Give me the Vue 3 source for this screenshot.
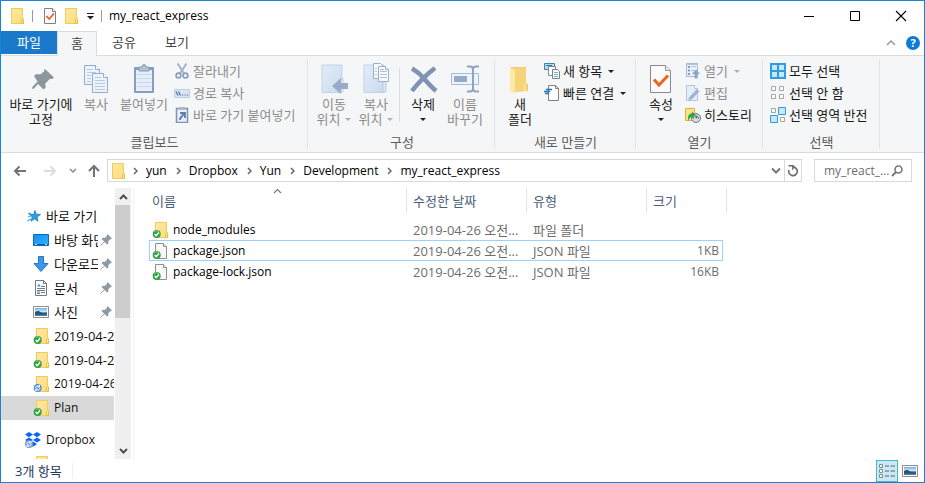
<script setup>
const tabs = ['홈', '공유', '보기']
const crumbs = ['yun', 'Dropbox', 'Yun', 'Development', 'my_react_express']

const quickAccess = [
  { name: '바탕 화면', icon: 'desktop', pinned: true },
  { name: '다운로드', icon: 'download', pinned: true },
  { name: '문서', icon: 'document', pinned: true },
  { name: '사진', icon: 'picture', pinned: true },
  { name: '2019-04-2', icon: 'folder-ok' },
  { name: '2019-04-2', icon: 'folder-ok' },
  { name: '2019-04-26', icon: 'folder-sync', latin: true },
  { name: 'Plan', icon: 'folder-ok', active: true, latin: true },
]

const files = [
  { name: 'node_modules', date: '2019-04-26 오전...', type: '파일 폴더', size: '', icon: 'folder-ok' },
  { name: 'package.json', date: '2019-04-26 오전...', type: 'JSON 파일', size: '1KB', icon: 'file-ok', focused: true },
  { name: 'package-lock.json', date: '2019-04-26 오전...', type: 'JSON 파일', size: '16KB', icon: 'file-ok' },
]

const groups = [
  {
    label: '클립보드',
    cls: 'g-clip',
    large: [
      { lines: ['바로 가기에', '고정'], icon: 'pin-lg', w: 'w72' },
      { lines: ['복사'], icon: 'copy-lg', w: 'w38', off: true },
      { lines: ['붙여넣기'], icon: 'paste-lg', w: 'w58', off: true },
    ],
    small: [
      { text: '잘라내기', icon: 'cut', off: true },
      { text: '경로 복사', icon: 'path', off: true },
      { text: '바로 가기 붙여넣기', icon: 'paste-link', off: true },
    ],
  },
  {
    label: '구성',
    cls: 'g-org',
    large: [
      { lines: ['이동', '위치'], icon: 'move-lg', w: 'w42', off: true, arrow: true },
      { lines: ['복사', '위치'], icon: 'copyto-lg', w: 'w42', off: true, arrow: true },
      { lines: ['삭제', ''], icon: 'delete-lg', w: 'w42', arrow: true, split: true },
      { lines: ['이름', '바꾸기'], icon: 'rename-lg', w: 'w42', off: true },
    ],
    small: [],
  },
  {
    label: '새로 만들기',
    cls: 'g-new',
    large: [{ lines: ['새', '폴더'], icon: 'newfolder-lg', w: 'w42' }],
    small: [
      { text: '새 항목', icon: 'newitem', arrow: true },
      { text: '빠른 연결', icon: 'easy', arrow: true },
    ],
  },
  {
    label: '열기',
    cls: 'g-open',
    large: [{ lines: ['속성', ''], icon: 'props-lg', w: 'w42', arrow: true }],
    small: [
      { text: '열기', icon: 'open', off: true, arrow: true },
      { text: '편집', icon: 'edit', off: true },
      { text: '히스토리', icon: 'history' },
    ],
  },
  {
    label: '선택',
    cls: 'g-sel',
    large: [],
    small: [
      { text: '모두 선택', icon: 'sel-all' },
      { text: '선택 안 함', icon: 'sel-none' },
      { text: '선택 영역 반전', icon: 'sel-inv' },
    ],
  },
]
</script>

<template>
  <div class="window">
    <svg class="defs" width="0" height="0" aria-hidden="true">
      <defs>
        <linearGradient id="gFolder" x1="0" y1="0" x2="1" y2="1"><stop offset="0" stop-color="#ffe9a2" /><stop offset="1" stop-color="#fbdb7c" /></linearGradient>
        <linearGradient id="gBlue" x1="0" y1="0" x2="1" y2="1"><stop offset="0" stop-color="#1490f0" /><stop offset="1" stop-color="#35b0ff" /></linearGradient>
        <linearGradient id="gPale" x1="0" y1="0" x2="1" y2="1"><stop offset="0" stop-color="#e3edf8" /><stop offset="1" stop-color="#c9daee" /></linearGradient>
        <linearGradient id="gSky" x1="0" y1="0" x2="0" y2="1"><stop offset="0" stop-color="#6eaee8" /><stop offset=".5" stop-color="#d9effa" /><stop offset=".6" stop-color="#31547a" /><stop offset="1" stop-color="#4e86ae" /></linearGradient>
      </defs>
      <symbol id="folder" viewBox="0 0 16 16">
        <path d="M1.500.5h11v9l1 1v5h-12z" fill="url(#gFolder)" stroke="#efcb5d" />
        <path d="M11.500 15.500v-4l1-1 1 1v4z" fill="#ffe69a" stroke="#e8bd43" />
      </symbol>
      <symbol id="badge-ok" viewBox="0 0 16 16">
        <circle cx="4.700" cy="12" r="4" fill="#2fa043" /><path d="M2.300 10a3 3 0 0 1 4.700 0" fill="none" stroke="#86cf8d" />
        <path d="M2.700 12l1.500 1.700 2.800-3.200" fill="none" stroke="#fff" stroke-width="1.400" />
      </symbol>
      <symbol id="badge-sync" viewBox="0 0 16 16">
        <circle cx="4.700" cy="12" r="4" fill="#5b8fd0" />
        <path d="M2.300 12a2.500 2.500 0 0 1 4-1.500M7.100 12a2.500 2.500 0 0 1-4 1.700M6.500 9v2h-2M2.800 15v-2h2" fill="none" stroke="#fff" />
      </symbol>
      <symbol id="folder-ok" viewBox="0 0 16 16">
        <path d="M3.500.5h11v9l1 1v5h-12z" fill="url(#gFolder)" stroke="#efcb5d" /><path d="M13.500 15.500v-4l1-1 1 1v4z" fill="#ffe69a" stroke="#e8bd43" />
        <use href="#badge-ok" />
      </symbol>
      <symbol id="folder-sync" viewBox="0 0 16 16">
        <path d="M3.500.5h11v9l1 1v5h-12z" fill="url(#gFolder)" stroke="#efcb5d" /><path d="M13.500 15.500v-4l1-1 1 1v4z" fill="#ffe69a" stroke="#e8bd43" />
        <use href="#badge-sync" />
      </symbol>
      <symbol id="file-ok" viewBox="0 0 16 16">
        <path d="M3.500.5h8l3 3v12h-11z" fill="#f8f8f8" stroke="#8f8f8f" /><path d="M11.500.5v3h3" fill="#fff" stroke="#8f8f8f" />
        <use href="#badge-ok" />
      </symbol>
      <symbol id="props" viewBox="0 0 16 16">
        <path d="M2.500.5h8l3 3v12h-11z" fill="#fafafa" stroke="#808080" /><path d="M10.500.5v3h3" fill="#fff" stroke="#808080" />
        <path d="M4.500 8l2.700 3 4.800-5.500" fill="none" stroke="#e8602c" stroke-width="1.800" />
      </symbol>
      <symbol id="pin" viewBox="0 0 12 12">
        <path d="M7.500 0L12 4.500l-1 .8-.8-.1-2 2.200.2 2-1.200 1.200-2.700-2.700L1 11.500l-1 .5.500-1 3.600-3.500L1.500 5l1.200-1.200 2 .2 2.200-2-.1-1z" fill="#8d9aa3" />
      </symbol>
      <symbol id="desktop" viewBox="0 0 16 16"><path d="M.5 2.500h15v11H.5z" fill="url(#gBlue)" stroke="#0a6cc0" /><path d="M1 12.500h14" stroke="#075ba6" /><path d="M2 12.500h2M12 12.500h2" stroke="#bfe4ff" /></symbol>
      <symbol id="download" viewBox="0 0 16 16"><path d="M5.500.5h5v7h4.500L8 15.500 1 7.500h4.500z" fill="#3b97e8" stroke="#2277c8" /></symbol>
      <symbol id="document" viewBox="0 0 16 16"><path d="M2.500.5h8l3 3v12h-11z" fill="#fff" stroke="#777" /><path d="M10.500.5v3h3" fill="none" stroke="#777" /><path d="M4 8.500h8M4 10.500h8M8 12.500h4M8 6.500h4M4 13.500h3M4 12h3" stroke="#657f99" /><path d="M4 6.500l2-3 1.500 3z" fill="#3c95dc" /></symbol>
      <symbol id="picture" viewBox="0 0 16 16"><path d="M.5 2.500h15v11H.5z" fill="#fff" stroke="#8d8d8d" /><path d="M2 4h12v8H2z" fill="url(#gSky)" /><path d="M2 8q3-2 6 .5t6 .5v1.500H2z" fill="#2d506c" /></symbol>
      <symbol id="star" viewBox="0 0 16 16"><path d="M9 2.500l1.200 3.700 4.300.3L11 9l1 4.200-3.500-2.400L5 13.200l1.400-4.200L3.500 6.500l4.200.1z" fill="#2f9fe8" stroke="#1578c2" stroke-width=".8" /><path d="M2 5.500h3M2 9l3-1M1.500 13l4-2.500" stroke="#4badea" stroke-width="1.300" /></symbol>
      <symbol id="dropbox" viewBox="0 0 18 18"><path d="M5 1l4 2.600L5 6.200 1 3.600zM13 1l4 2.600-4 2.600-4-2.600zM5 6.400L9 9l-4 2.600L1 9zM13 6.400L17 9l-4 2.600L9 9zM9 10.500l4 2.600-4 2.600-4-2.600z" fill="#0a64f5" /><circle cx="5" cy="13" r="4" fill="#6d9cd8" /><path d="M2.700 13a2.500 2.500 0 0 1 4-1.500M7.300 13a2.500 2.500 0 0 1-4 1.700M7 10v2H5M3 16v-2h2" fill="none" stroke="#fff" /></symbol>

      <symbol id="pin-lg" viewBox="0 0 32 32"><path d="M20 6l9 8.500-2 1.500-2-.3-4.800 5 .5 3.800-2.200 2-5.500-5.500L9 25.500 7 26l.5-2.300 5-5.200L9 13l2.200-2 4 .5L19.500 8 19 6.500z" fill="#8b979d" /></symbol>
      <symbol id="copy-lg" viewBox="0 0 32 32"><g fill="#edf3fb" stroke="#96abce"><path d="M4.500 2.500h11l4 4v15h-15z" /><path d="M15.500 2.500v4h4" fill="#fff" /><path d="M12.500 10.500h11l4 4v15h-15z" /><path d="M23.500 10.500v4h4" fill="#fff" /></g><path d="M7 6.500h6M7 9.500h9M7 12.500h4M7 15.500h4M7 18.500h4M15 14.500h6M15 17.500h10M15 20.500h10M15 23.500h10M15 26.500h10" stroke="#b6c9e3" /></symbol>
      <symbol id="paste-lg" viewBox="0 0 32 32"><rect x="6" y="4" width="20" height="26" rx="1" fill="#899dc2" /><path d="M8 7h16v21H8z" fill="#e6eff9" /><path d="M9 11.500h14M9 15.500h14M9 19.500h14M9 23.500h14" stroke="#c7d8eb" /><path d="M11 4h3q0-2.500 2-2.500T18 4h3v4H11z" fill="#b5c1d5" stroke="#8998b3" /></symbol>
      <symbol id="cut" viewBox="0 0 16 16"><path d="M3.500.5l6.500 10M12.500.5L6 10.500" stroke="#a3b3cc" stroke-width="2" /><g fill="none" stroke="#889dbd" stroke-width="1.600"><circle cx="4.500" cy="12.500" r="2.400" /><circle cx="11.500" cy="12.500" r="2.400" /></g></symbol>
      <symbol id="path" viewBox="0 0 16 16"><path d="M.5 4.500h15v8H.5z" fill="#d7e5f5" stroke="#bdcfe5" /><path d="M2 6.500l2 4M4.500 6.500l2 4M8 10h1.200M10.500 10h1.200M13 10h1.200" stroke="#526f9b" stroke-width="1.200" /></symbol>
      <symbol id="paste-link" viewBox="0 0 16 16"><path d="M2.500 1.500h11v14h-11z" fill="#e8f0fa" stroke="#7e95bb" stroke-width="1.500" /><path d="M5 0h6v3H5z" fill="#aab9d1" /><path d="M6 6h5v5M10.500 6.500L8 9q-2 2-2 4" fill="none" stroke="#617da9" stroke-width="1.800" /></symbol>
      <symbol id="move-lg" viewBox="0 0 32 32"><path d="M4 2h20v27.500H4z" fill="url(#gPale)" stroke="#c1d2e7" /><path d="M22.500 29V17.500l2.500-2.500v14" fill="#dae6f4" stroke="#c1d2e7" /><path d="M14 23l9-8v5h7v6h-7v5z" fill="#98abc9" /></symbol>
      <symbol id="copyto-lg" viewBox="0 0 32 32"><path d="M4 2h20v27.500H4z" fill="url(#gPale)" stroke="#c1d2e7" /><path d="M23 29V18l3-2v13z" fill="#dae6f4" stroke="#b9cde4" /><g fill="#f7faff" stroke="#9aafcf"><path d="M13.500.5h7l3 3v12h-10z" /><path d="M18.500 3.500h7l3 3v12h-10z" /><path d="M25.500 3.500v3h3" /></g><path d="M15 5.500h2M15 8.500h2M15 11.500h2M20 8.500h7M20 11.500h7M20 14.500h7M20 6.500h4" stroke="#adc1dd" /></symbol>
      <symbol id="delete-lg" viewBox="0 0 32 32"><path d="M5 5.500q7 4 11.500 9.500T29 28M28 5Q14 16 5 28" fill="none" stroke="#8193b3" stroke-width="4.500" /></symbol>
      <symbol id="rename-lg" viewBox="0 0 32 32"><path d="M2.500 10.500h27v11h-27z" fill="#edf4fc" stroke="#a6bbd7" /><path d="M5 13h13v6H5z" fill="#98aac8" /><path d="M18 3.500h3q3 0 3 3v19q0 3-3 3h-3M30 3.500h-3q-3 0-3 3v19q0 3 3 3h3" fill="none" stroke="#8fa3c2" stroke-width="2" /></symbol>
      <symbol id="newfolder-lg" viewBox="0 0 32 32"><path d="M6 4h16v16l2 1v7l-13 1z" fill="#f5cd68" /><path d="M6 4l5 3v24l-5-3z" fill="#ffe8a8" /><path d="M11 5h11v14l-2 3v6h-9z" fill="#f7d477" /><path d="M20 22l2-3v9h-2z" fill="#fae198" /></symbol>
      <symbol id="newitem" viewBox="0 0 16 16"><path d="M.5.5h10v6H.5z" fill="#b6dcf4" stroke="#3f82b2" /><path d="M4.500 3.500h7v9h-7z" fill="#fff" stroke="#7f8991" /><path d="M8.500 6.500h5l2 2v7h-7z" fill="#fff" stroke="#78818a" /><path d="M10 9.500h4M10 11.500h4M10 13.500h4" stroke="#73a6ca" /><path d="M2 2.500h6" stroke="#2d74a8" /></symbol>
      <symbol id="easy" viewBox="0 0 16 16"><path d="M4.500.5h7l3 3v12h-10z" fill="#fff" stroke="#818181" /><path d="M11.500.5v3h3" fill="none" stroke="#818181" /><path d="M2 4.500h6M0 6.500h6M1 8.500h4" stroke="#2572b8" stroke-width="1.300" /></symbol>
      <symbol id="props-lg" viewBox="0 0 32 32"><path d="M5.500 2.500h15l5 5v22h-20z" fill="#fbfbfb" stroke="#888" /><path d="M20.500 2.500v5h5" fill="#ececec" stroke="#999" /><path d="M9 16.500l5 5.500 9-9.500" fill="none" stroke="#ec6420" stroke-width="3" /></symbol>
      <symbol id="open" viewBox="0 0 16 16"><path d="M1.500.5h11v13h-11z" fill="#e9f1fb" stroke="#a7b9d5" /><path d="M3 3h2v2H3zM3 6.500h2v2H3zM3 10h2v2H3z" fill="#879dbf" /><path d="M6 3.500h5M6 7.500h4M1 1.500h12" stroke="#b2c3db" /><path d="M11 6.500l4 4.500h-2.500v4.500h-3V11H7z" fill="#8fa3c5" /></symbol>
      <symbol id="edit" viewBox="0 0 16 16"><path d="M1.500.5h8l3 3v12h-11z" fill="#e4eefa" stroke="#b4c5df" /><path d="M9.500.5v3h3" fill="#fff" stroke="#b4c5df" /><path d="M12 4L14.500 6.500 7 14l-4 1.500L4.500 12z" fill="#a0b2cd" /></symbol>
      <symbol id="history" viewBox="0 0 16 16"><path d="M.5 1.500h9v12h-9z" fill="#fde286" stroke="#dfb43b" /><circle cx="11" cy="11" r="4.500" fill="#d6dade" stroke="#737980" /><path d="M11 8v3l2-1.500M8 11h1M13 11h1" stroke="#41464d" fill="none" /><path d="M3.500 14.500Q1.500 7 7 6V4.500L10.500 8 7 11.500V9.500q-3 1-3.500 5z" fill="#27a64a" /></symbol>
      <symbol id="sel-all" viewBox="0 0 16 16"><path d="M1 1h7v7H1zM8 1h7v7H8zM1 8h7v7H1zM8 8h7v7H8z" fill="#c5e8fc" stroke="#319be0" stroke-width="2" /></symbol>
      <symbol id="sel-none" viewBox="0 0 16 16"><path d="M1.500 1.500h4v4h-4zM9.500 1.500h4v4h-4zM1.500 9.500h4v4h-4zM9.500 9.500h4v4h-4z" fill="#fff" stroke="#a3a3a3" /></symbol>
      <symbol id="sel-inv" viewBox="0 0 16 16"><path d="M1.500 1.500h4v4h-4zM10.500 10.500h4v4h-4z" fill="#fff" stroke="#a3a3a3" /><path d="M8.500.5h7v7h-7zM.5 8.500h7v7h-7z" fill="#c5e8fc" stroke="#319be0" /></symbol>
    </svg>

    <header class="titlebar">
      <svg class="i16" aria-hidden="true"><use href="#folder" /></svg>
      <span class="tick"></span>
      <button class="plain" aria-label="속성"><svg class="i16"><use href="#props" /></svg></button>
      <button class="plain" aria-label="새 폴더"><svg class="i16"><use href="#folder" /></svg></button>
      <button class="plain qat" aria-label="빠른 실행 도구 모음 사용자 지정"><svg width="7" height="7" viewBox="0 0 7 7"><path d="M0 .5h7" stroke="#222" /><path d="M0 3h7L3.500 6.500z" fill="#222" /></svg></button>
      <span class="tick"></span>
      <h1 class="title">my_react_express</h1>
      <div class="caption">
        <button class="plain" aria-label="최소화"><svg width="12" height="12" viewBox="0 0 12 12"><path d="M1 6.500h10" stroke="#000" /></svg></button>
        <button class="plain" aria-label="최대화"><svg width="12" height="12" viewBox="0 0 12 12"><path d="M1.500 1.500h9v9h-9z" fill="none" stroke="#000" /></svg></button>
        <button class="plain" aria-label="닫기"><svg width="12" height="12" viewBox="0 0 12 12"><path d="M1 1l10 10M11 1L1 11" stroke="#000" stroke-width="1.100" /></svg></button>
      </div>
    </header>

    <nav class="tabs">
      <button class="tab file">파일</button>
      <button v-for="(t, i) in tabs" :key="t" class="tab" :class="{ current: i === 0 }">{{ t }}</button>
      <div class="tab-tools">
        <button class="plain" aria-label="리본 최소화"><svg width="10" height="6" viewBox="0 0 10 6"><path d="M1 5l4-4 4 4" fill="none" stroke="#999" stroke-width="1.500" /></svg></button>
        <button class="plain help" aria-label="도움말">?</button>
      </div>
    </nav>

    <section class="ribbon">
      <div v-for="g in groups" :key="g.label" class="group" :class="g.cls">
        <div class="group-body">
          <template v-for="b in g.large" :key="b.icon">
            <span v-if="b.split" class="divider"></span>
            <button class="large" :class="[b.w, { off: b.off }]">
              <svg class="i32" aria-hidden="true"><use :href="'#' + b.icon" /></svg>
              <span v-for="(l, i) in b.lines" :key="i" class="line">
                <span v-if="l">{{ l }}</span>
                <i v-if="b.arrow && i === 1" class="arrow"></i>
              </span>
            </button>
          </template>
          <div v-if="g.small.length" class="smalls">
            <button v-for="s in g.small" :key="s.text" class="small" :class="{ off: s.off }">
              <svg class="i16" aria-hidden="true"><use :href="'#' + s.icon" /></svg>
              <span>{{ s.text }}</span>
              <i v-if="s.arrow" class="arrow"></i>
            </button>
          </div>
        </div>
        <div class="group-label">{{ g.label }}</div>
      </div>
    </section>

    <div class="navbar">
      <button class="plain nb" aria-label="뒤로"><svg width="14" height="12" viewBox="0 0 14 12"><path d="M13 6H2M6.500 1.500L2 6l4.500 4.500" fill="none" stroke="#737373" stroke-width="2" /></svg></button>
      <button class="plain nb" aria-label="앞으로"><svg width="14" height="12" viewBox="0 0 14 12"><path d="M1 6h11M7.500 1.500L12 6l-4.500 4.500" fill="none" stroke="#dcdcdc" stroke-width="2" /></svg></button>
      <button class="plain nb recent" aria-label="최근 위치"><svg width="8" height="6" viewBox="0 0 8 6"><path d="M1 1l3 3 3-3" fill="none" stroke="#8a8a8a" stroke-width="1.500" /></svg></button>
      <button class="plain nb up" aria-label="위로"><svg width="12" height="14" viewBox="0 0 12 14"><path d="M6 13V2M1 7l5-5 5 5" fill="none" stroke="#737373" stroke-width="2" /></svg></button>
      <div class="address">
        <svg class="i16 place" aria-hidden="true"><use href="#folder" /></svg>
        <template v-for="c in crumbs" :key="c">
          <svg class="chev" width="5" height="8" viewBox="0 0 5 8" aria-hidden="true"><path d="M1 1l3 3-3 3" fill="none" stroke="#666" stroke-width="1.500" /></svg>
          <a class="crumb" href="#">{{ c }}</a>
        </template>
        <button class="plain drop" aria-label="이전 위치"><svg width="10" height="8" viewBox="0 0 10 8"><path d="M1 1.500l4 4 4-4" fill="none" stroke="#777" stroke-width="2" /></svg></button>
        <button class="plain refresh" aria-label="새로 고침"><svg width="12" height="13" viewBox="0 0 12 13"><path d="M2 6A4.200 4.200 0 1 0 8.500 4L5.800 2" fill="none" stroke="#6d6d6d" stroke-width="1.600" /><path d="M1.500 1.700h4.300v4" fill="none" stroke="#6d6d6d" stroke-width="1.500" /></svg></button>
      </div>
      <label class="search">
        <input type="text" placeholder="my_react_..." aria-label="my_react_express 검색" />
        <svg width="12" height="12" viewBox="0 0 12 12" aria-hidden="true"><circle cx="7.500" cy="4.500" r="3.500" fill="none" stroke="#777" stroke-width="1.600" /><path d="M5 7L1 11" stroke="#777" stroke-width="2" /></svg>
      </label>
    </div>

    <main class="content">
      <aside class="side">
        <div class="tree">
          <a class="node root" href="#"><svg class="i16"><use href="#star" /></svg><span class="node-name">바로 가기</span></a>
          <a v-for="(q, i) in quickAccess" :key="i" class="node" :class="{ active: q.active, latin: q.latin, pinned: q.pinned }" href="#">
            <svg class="i16" aria-hidden="true"><use :href="'#' + q.icon" /></svg>
            <span class="node-name">{{ q.name }}</span>
            <svg v-if="q.pinned" class="pin" aria-hidden="true"><use href="#pin" /></svg>
          </a>
          <a class="node root dbx latin" href="#"><svg class="i18"><use href="#dropbox" /></svg><span class="node-name">Dropbox</span></a>
          <a class="node" href="#" aria-label="Dropbox"><svg class="i16"><use href="#folder-ok" /></svg></a>
        </div>
        <div class="scrollbar">
          <button class="plain sb" aria-label="위로 스크롤"><svg width="9" height="6" viewBox="0 0 9 6"><path d="M1 5l3.500-3.500L8 5" fill="none" stroke="#505050" stroke-width="2" /></svg></button>
          <div class="thumb"></div>
          <button class="plain sb end" aria-label="아래로 스크롤"><svg width="9" height="6" viewBox="0 0 9 6"><path d="M1 1l3.500 3.500L8 1" fill="none" stroke="#505050" stroke-width="2" /></svg></button>
        </div>
      </aside>
      <div class="list">
        <table>
          <colgroup><col class="c1" /><col class="c2" /><col class="c2" /><col class="c4" /><col class="c5" /></colgroup>
          <thead>
            <tr>
              <th scope="col">이름<svg class="sort" width="9" height="6" viewBox="0 0 9 6"><path d="M1 5l3.500-3.500L8 5" fill="none" stroke="#777" stroke-width="1.200" /></svg></th>
              <th scope="col">수정한 날짜</th>
              <th scope="col">유형</th>
              <th scope="col" colspan="2">크기</th>
            </tr>
          </thead>
          <tbody>
            <tr v-for="f in files" :key="f.name" :class="{ focused: f.focused }">
              <td class="name"><span class="name-in"><svg class="i16" aria-hidden="true"><use :href="'#' + f.icon" /></svg>{{ f.name }}</span></td>
              <td>{{ f.date }}</td>
              <td>{{ f.type }}</td>
              <td class="size">{{ f.size }}</td>
              <td class="blank"></td>
            </tr>
          </tbody>
        </table>
      </div>
    </main>

    <footer class="status">
      <span class="count">3개 항목</span>
      <div class="views">
        <button class="plain view on" aria-label="자세히"><svg width="16" height="14" viewBox="0 0 16 14"><path d="M.5.5h3v3h-3zM.5 5.500h3v3h-3zM.5 10.500h3v3h-3z" fill="#fff" stroke="#7b8d98" /><path d="M6 2h4M11.500 2H16M6 7h4M11.500 7H16M6 12h4M11.500 12H16" stroke="#53656f" /></svg></button>
        <button class="plain view" aria-label="큰 아이콘"><svg class="i16"><use href="#picture" /></svg></button>
      </div>
    </footer>
  </div>
</template>

<style>
body {
  margin: 0;
}
</style>

<style scoped>
.window {
  box-sizing: border-box;
  min-height: 100vh;
  display: flex;
  flex-direction: column;
  border: 1px solid #1883d7;
  background: #fff;
  color: #1a1a1a;
  font: 12px/16px "Open Sans", "Noto Sans CJK KR", sans-serif;
  overflow: hidden;
}
.defs { position: absolute; }
svg { display: block; flex: none; }
button {
  font: inherit;
  color: inherit;
  border: 0;
  padding: 0;
  margin: 0;
  background: none;
}
a { color: inherit; text-decoration: none; }
.plain { display: flex; align-items: center; justify-content: center; }
.i16 { width: 16px; height: 16px; }
.i18 { width: 18px; height: 18px; }
.i32 { width: 32px; height: 32px; }

.titlebar { display: flex; align-items: center; height: 30px; padding-left: 9px; }
.tick { width: 1px; height: 12px; margin: 0 9px 0 6px; background: #9a9a9a; }
.titlebar .plain + .plain { margin-left: 6px; }
.qat { width: 8px; }
.qat + .tick { margin: 0 7px; }
.title { margin: 0; font-size: 12px; font-weight: 400; color: #000; }
.caption { display: flex; align-self: stretch; margin-left: auto; }
.caption .plain { width: 46px; margin: 0; }
.titlebar .caption .plain + .plain { margin: 0; }

.tabs { display: flex; height: 24px; font-size: 13px; border-bottom: 1px solid #dadbdc; color: #444; }
.tab { width: 64px; padding-bottom: 2px; }
.tab.file { width: 56px; height: 23px; background: #1979ca; color: #fff; }
.tab.current {
  width: 40px;
  height: 25px;
  box-sizing: border-box;
  background: #f5f6f7;
  border: 1px solid #dadbdc;
  border-bottom: 0;
}
.tab.current + .tab { width: 54px; }
.tab.current + .tab + .tab { width: 52px; }
.tab-tools { display: flex; align-items: center; gap: 10px; margin-left: auto; padding-right: 4px; }
.help { width: 14px; height: 14px; border-radius: 50%; background: #0f7ad6; color: #fff; font-size: 11px; font-weight: 700; line-height: 14px; }

.ribbon { display: flex; height: 96px; background: #f5f6f7; border-bottom: 1px solid #dadbdc; font-size: 13px; }
.group { display: flex; flex-direction: column; box-sizing: border-box; padding: 0 4px; position: relative; }
.group::after { content: ""; position: absolute; right: 0; top: 3px; bottom: 3px; width: 1px; background: #e2e3e4; }
.g-clip { width: 307px; }
.g-org { width: 187px; padding-left: 5px; }
.g-new { width: 141px; }
.g-open { width: 127px; }
.g-sel { width: 117px; }
.group-body { display: flex; height: 78px; }
.group-label { text-align: center; line-height: 16px; color: #5a5a5a; }
.large { display: flex; flex-direction: column; align-items: center; padding-top: 7px; white-space: nowrap; }
.large .i32 { margin-bottom: 2px; }
.line { display: flex; align-items: center; justify-content: center; gap: 5px; height: 15px; line-height: 15px; }
.w72 { width: 72px; }
.w38 { width: 38px; }
.w42 { width: 42px; }
.w58 { width: 58px; }
.divider { width: 1px; margin: 12px 2px; background: #dcdddf; }
.off { color: #8c8c8c; }
.arrow { border: 3px solid transparent; border-top-color: #222; border-bottom: 0; }
.off .arrow { border-top-color: #b0b0b0; }
.smalls { display: flex; flex-direction: column; padding: 4px 0 0 3px; }
.g-clip .smalls { padding-left: 1px; }
.small { display: flex; align-items: center; gap: 3px; height: 22px; white-space: nowrap; }
.small .arrow { margin-left: 3px; }

.navbar { display: flex; align-items: center; height: 35px; padding: 0 12px 0 8px; }
.nb { width: 22px; height: 22px; }
.nb + .nb { margin-left: 8px; }
.nb + .nb.recent { width: 16px; margin-left: 4px; }
.nb + .nb.up { width: 20px; margin-left: 3px; }
.address { flex: 1; display: flex; align-items: center; box-sizing: border-box; height: 23px; margin: 0 12px 0 3px; padding-left: 3px; border: 1px solid #d9d9d9; color: #000; }
.chev { margin: 0 8px 0 9px; }
.place + .chev { margin-left: 6px; }
.drop { width: 16px; margin-left: auto; }
.refresh { width: 17px; align-self: stretch; border-left: 1px solid #d9d9d9; }
.search { display: flex; align-items: center; box-sizing: border-box; width: 98px; height: 23px; padding: 0 8px 0 9px; border: 1px solid #d9d9d9; }
.search input { flex: 1; min-width: 0; border: 0; outline: 0; padding: 0; background: none; font: inherit; }
.search input::placeholder { color: #6d6d6d; opacity: 1; }

.content { flex: 1 1 0; min-height: 0; display: flex; }
.side { display: flex; width: 130px; flex: none; overflow: hidden; }
.tree { width: 113px; margin-right: 1px; padding-top: 16px; overflow: hidden; height: 255px; font-size: 13px; }
.node { display: flex; align-items: center; height: 24px; padding-left: 32px; gap: 5px; white-space: nowrap; color: #111; }
.node.pinned { padding-right: 2px; }
.node.root { padding-left: 25px; gap: 4px; }
.node.dbx { margin-top: 8px; padding-left: 23px; }
.node.active { background: #d9d9d9; }
.latin { font-size: 12px; }
.node-name { flex: 1; min-width: 0; overflow: hidden; }
.pin { width: 12px; height: 12px; margin-left: -3px; }
.scrollbar { width: 16px; display: flex; flex-direction: column; background: #f0f0f0; }
.sb { height: 17px; }
.sb.end { margin-top: auto; }
.thumb { height: 113px; width: 15px; background: #cdcdcd; }
.list { flex: 1; padding-left: 15px; margin-left: 2px; border-left: 1px solid #f3f3f3; overflow: hidden; }

table { border-spacing: 0; table-layout: fixed; width: 578px; font-size: 13px; }
.c1 { width: 258px; }
.c2 { width: 120px; }
.c4 { width: 76px; }
.c5 { width: 4px; }
th { position: relative; box-sizing: border-box; height: 25px; padding: 0 0 0 6px; text-align: left; font-weight: 400; color: #4c607a; border-right: 1px solid #e5e5e5; }
th:first-child { padding-left: 3px; }
.sort { position: absolute; left: 124px; top: 0; }
tbody::before { content: ""; display: block; height: 6px; }
td { height: 21px; padding: 0 0 0 6px; line-height: 16px; color: #6d6d6d; white-space: nowrap; overflow: hidden; }
td.name { padding-left: 3px; color: #000; font-size: 12px; }
td.size { text-align: right; padding: 0 4px 0 0; font-size: 12px; }
td.blank { padding: 0; }
.name-in { display: flex; align-items: center; gap: 5px; }
.focused td { box-shadow: inset 0 1px #99d1ff, inset 0 -1px #99d1ff; }
.focused td:first-child { box-shadow: inset 0 1px #99d1ff, inset 0 -1px #99d1ff, inset 1px 0 #99d1ff; }
.focused td.size { box-shadow: inset 0 1px #99d1ff, inset 0 -1px #99d1ff, inset -1px 0 #99d1ff; }
.focused td.blank { box-shadow: none; }

.status { display: flex; align-items: center; height: 23px; padding: 0 3px 0 14px; color: #1e395b; font-size: 13px; }
.count { padding-right: 10px; border-right: 1px solid #f0f0f0; }
.views { display: flex; margin-left: auto; gap: 1px; }
.view { width: 22px; height: 22px; box-sizing: border-box; }
.view.on { background: #cce8f4; border: 1px solid #4cb4c9; }
</style>
